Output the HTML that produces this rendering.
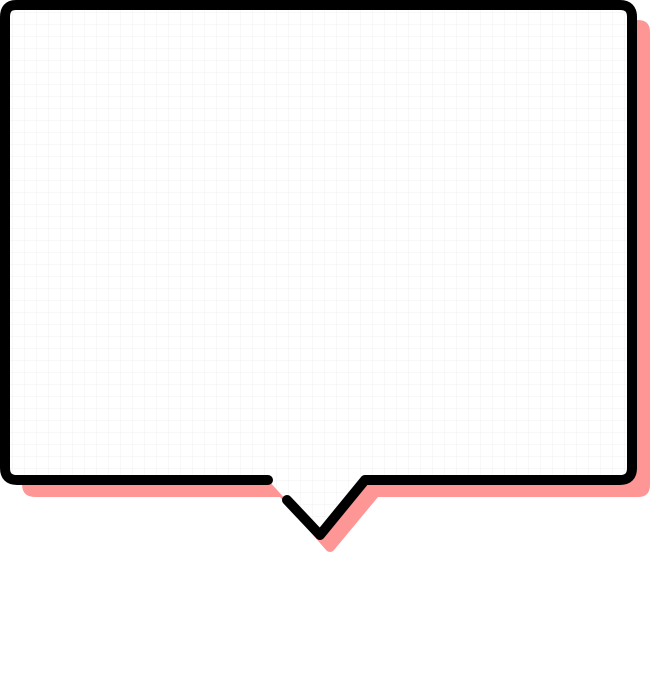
<!DOCTYPE html>
<html><head><style>
html,body{margin:0;padding:0;background:#fff;width:650px;height:681px;overflow:hidden}
</style></head><body>
<svg width="650" height="681" viewBox="0 0 650 681" xmlns="http://www.w3.org/2000/svg">
<defs>
<pattern id="g" x="1" y="1" width="12" height="12" patternUnits="userSpaceOnUse">
<path d="M12 0V12M0 12H12" stroke="#f0f0f0" stroke-width="1" fill="none"/>
</pattern>
</defs>
<path d="M30,20 H638 Q650,20 650,32 V485 Q650,497 638,497 H378 L334,550 Q330,554 326,550 L280,497 H35 Q22,497 22,484 V20 Z" fill="#ff9696"/>
<path d="M16,5 H620 Q632,5 632,17 V468 Q632,480 620,480 H365 L320,537 L268,480 H17 Q5,480 5,468 V17 Q5,5 16,5 Z" fill="#fff"/>
<path d="M16,5 H620 Q632,5 632,17 V468 Q632,480 620,480 H365 L320,537 L268,480 H17 Q5,480 5,468 V17 Q5,5 16,5 Z" fill="url(#g)"/>
<path d="M268,480 H17 Q5,480 5,468 V17 Q5,5 16,5 H620 Q632,5 632,17 V468 Q632,480 620,480 H365 L320,535 L287,500" fill="none" stroke="#000" stroke-width="10" stroke-linecap="round" stroke-linejoin="round"/>
</svg>
</body></html>
